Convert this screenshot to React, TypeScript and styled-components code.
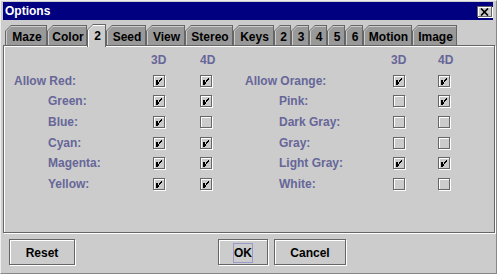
import * as React from 'react';
import styled, { createGlobalStyle } from 'styled-components';

type Item = { label: string; main?: boolean; d3: boolean; d4: boolean };

const TABS = [
  { label: 'Maze', w: 42 },
  { label: 'Color', w: 40 },
  { label: '2', w: 19, active: true },
  { label: 'Seed', w: 40 },
  { label: 'View', w: 39 },
  { label: 'Stereo', w: 48 },
  { label: 'Keys', w: 41 },
  { label: '2', w: 17 },
  { label: '3', w: 18 },
  { label: '4', w: 18 },
  { label: '5', w: 18 },
  { label: '6', w: 18 },
  { label: 'Motion', w: 49 },
  { label: 'Image', w: 45 },
];

const LEFT: Item[] = [
  { label: 'Allow Red:', main: true, d3: true, d4: true },
  { label: 'Green:', d3: true, d4: true },
  { label: 'Blue:', d3: true, d4: false },
  { label: 'Cyan:', d3: true, d4: true },
  { label: 'Magenta:', d3: true, d4: true },
  { label: 'Yellow:', d3: true, d4: true },
];

const RIGHT: Item[] = [
  { label: 'Allow Orange:', main: true, d3: true, d4: true },
  { label: 'Pink:', d3: false, d4: true },
  { label: 'Dark Gray:', d3: false, d4: false },
  { label: 'Gray:', d3: false, d4: false },
  { label: 'Light Gray:', d3: true, d4: true },
  { label: 'White:', d3: false, d4: false },
];

export default function App() {
  return (
    <>
      <GlobalStyle />
      <Window>
        <TitleBar>
          <Title>Options</Title>
          <CloseButton>
            <svg width="9" height="8" viewBox="0 0 9 8">
              <path d="M1 0.5 L8 7.5 M8 0.5 L1 7.5" stroke="#000" strokeWidth="1.7" fill="none" />
            </svg>
          </CloseButton>
        </TitleBar>

        <TabRow>
          {TABS.map((t, i) => (
            <Tab key={i} $w={t.w} $active={t.active}>
              <TabHighlight $active={t.active}>
                <TabFace $active={t.active}>{t.label}</TabFace>
              </TabHighlight>
            </Tab>
          ))}
        </TabRow>

        <Panel>
          <Half $label={139} $gap={34}>
            <ColorTable items={LEFT} label={139} gap={34} />
          </Half>
          <Half $label={148} $gap={32}>
            <ColorTable items={RIGHT} label={148} gap={32} />
          </Half>
        </Panel>

        <ButtonRow>
          <Button $w={66}>Reset</Button>
          <Button $w={50} $gap={143}>
            <Focus>OK</Focus>
          </Button>
          <Button $w={72} $gap={6}>Cancel</Button>
        </ButtonRow>
      </Window>
    </>
  );
}

function ColorTable({ items, label, gap }: { items: Item[]; label: number; gap: number }) {
  return (
    <>
      <Row>
        <Label $w={label} />
        <Head>3D</Head>
        <Head $gap={gap}>4D</Head>
      </Row>
      {items.map((it) => (
        <Row key={it.label}>
          <Label $w={label} $indent={it.main ? 0 : 34}>{it.label}</Label>
          <CheckBox checked={it.d3} />
          <CheckBox checked={it.d4} gap={gap} />
        </Row>
      ))}
    </>
  );
}

function CheckBox({ checked, gap = 0 }: { checked: boolean; gap?: number }) {
  return (
    <Box $gap={gap}>
      {checked && (
        <svg width="11" height="11" viewBox="0 0 11 11" shapeRendering="crispEdges">
          <rect x="2" y="4" width="2" height="5" fill="#000" />
          {[0, 1, 2, 3, 4].map((i) => (
            <rect key={i} x={8 - i} y={2 + i} width="1" height="2" fill="#000" />
          ))}
        </svg>
      )}
    </Box>
  );
}

const GlobalStyle = createGlobalStyle`
  html, body {
    margin: 0;
    padding: 0;
    background: #cccccc;
  }
  body {
    font-family: "Liberation Sans", Arial, sans-serif;
  }
`;

const Window = styled.div`
  width: 497px;
  height: 274px;
  box-sizing: border-box;
  background: #cccccc;
  border-top: 1px solid #eeeeee;
  border-left: 1px solid #eeeeee;
  border-right: 1px solid #888888;
  border-bottom: 1px solid #888888;
  padding: 1px 0 0 1px;
  display: flex;
  flex-direction: column;
`;

const TitleBar = styled.div`
  width: 490px;
  height: 18px;
  margin-left: 1px;
  box-sizing: border-box;
  padding: 0 1px 0 2px;
  background: #000080;
  display: flex;
  align-items: center;
  justify-content: space-between;
`;

const Title = styled.span`
  color: #ffffff;
  font: bold 12px "Liberation Sans", Arial, sans-serif;
`;

const CloseButton = styled.div`
  width: 15px;
  height: 11px;
  margin-top: 1px;
  box-sizing: border-box;
  background: #cccccc;
  border: 1px solid #666666;
  box-shadow: inset 1px 1px 0 #ffffff, 1px 1px 0 #ffffff;
  display: flex;
  align-items: center;
  justify-content: center;
`;

const TabRow = styled.div`
  height: 21px;
  margin-top: 4px;
  padding-left: 3px;
  display: flex;
  align-items: flex-end;
`;

const Tab = styled.div<{ $w: number; $active?: boolean }>`
  width: ${(p) => p.$w}px;
  height: ${(p) => (p.$active ? 23 : 20)}px;
  margin-bottom: ${(p) => (p.$active ? -2 : 0)}px;
  position: relative;
  z-index: ${(p) => (p.$active ? 1 : 0)};
  box-sizing: border-box;
  padding: 1px 1px 0 1px;
  background: #666666;
  clip-path: polygon(0 6px, 6px 0, 100% 0, 100% 100%, 0 100%);
  display: flex;
`;

const TabHighlight = styled.div<{ $active?: boolean }>`
  flex: 1;
  padding: 1px 0 0 1px;
  background: ${(p) => (p.$active ? '#ffffff' : '#cccccc')};
  clip-path: polygon(0 5px, 5px 0, 100% 0, 100% 100%, 0 100%);
  display: flex;
`;

const TabFace = styled.div<{ $active?: boolean }>`
  flex: 1;
  background: ${(p) => (p.$active ? '#cccccc' : '#999999')};
  clip-path: polygon(0 4px, 4px 0, 100% 0, 100% 100%, 0 100%);
  display: flex;
  align-items: center;
  justify-content: center;
  padding: ${(p) => (p.$active ? '0 0 2px 1px' : '1px 0 0 1px')};
  color: #000000;
  font: bold 12px "Liberation Sans", Arial, sans-serif;
`;

const Panel = styled.div`
  width: 492px;
  height: 188px;
  margin-left: 1px;
  box-sizing: border-box;
  border: 1px solid #666666;
  box-shadow: inset 1px 1px 0 #ffffff, 1px 1px 0 #ffffff;
  padding: 3.6px 0 0 10px;
  display: flex;
  gap: 32px;
`;

const Half = styled.div<{ $label: number; $gap: number }>`
  width: ${(p) => p.$label + 26 + p.$gap}px;
  display: flex;
  flex-direction: column;
`;

const Row = styled.div`
  height: 20.7px;
  display: flex;
  align-items: center;
`;

const Label = styled.div<{ $w: number; $indent?: number }>`
  width: ${(p) => p.$w}px;
  box-sizing: border-box;
  padding-left: ${(p) => p.$indent ?? 0}px;
  color: #666699;
  font: bold 12px "Liberation Sans", Arial, sans-serif;
  white-space: nowrap;
`;

const Head = styled.div<{ $gap?: number }>`
  width: 13px;
  margin-left: ${(p) => p.$gap ?? 0}px;
  padding-left: 2px;
  color: #666699;
  font: bold 12px "Liberation Sans", Arial, sans-serif;
  white-space: nowrap;
  overflow: visible;
`;

const Box = styled.div<{ $gap: number }>`
  width: 12px;
  height: 12px;
  margin-left: ${(p) => p.$gap}px;
  margin-right: 1px;
  box-sizing: border-box;
  border: 1px solid #666666;
  box-shadow: inset 1px 1px 0 #ffffff, 1px 1px 0 #ffffff;
  display: flex;
`;

const ButtonRow = styled.div`
  margin-top: 6px;
  padding-left: 7px;
  display: flex;
`;

const Button = styled.div<{ $w: number; $gap?: number }>`
  width: ${(p) => p.$w}px;
  height: 26px;
  margin-left: ${(p) => p.$gap ?? 0}px;
  box-sizing: border-box;
  border: 1px solid #666666;
  box-shadow: inset 1px 1px 0 #ffffff, 1px 1px 0 #ffffff;
  display: flex;
  align-items: center;
  justify-content: center;
  padding-top: 1px;
  color: #000000;
  font: bold 12px "Liberation Sans", Arial, sans-serif;
`;

const Focus = styled.span`
  width: 20px;
  height: 20px;
  box-sizing: border-box;
  border: 1px solid #9999cc;
  display: flex;
  align-items: center;
  justify-content: center;
  padding-top: 1px;
`;
